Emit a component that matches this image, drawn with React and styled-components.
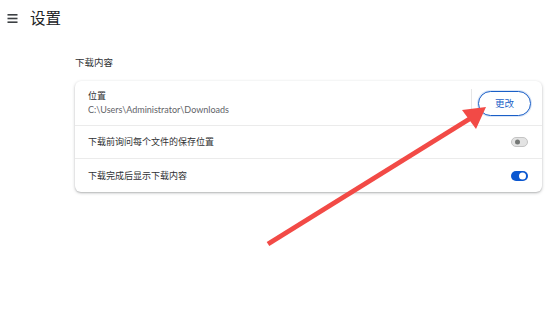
import styled, { createGlobalStyle } from "styled-components";

const GlobalStyle = createGlobalStyle`
  html, body {
    margin: 0;
    background: #fff;
  }
  body {
    font-family: "Noto Sans", "Noto Sans CJK SC", sans-serif;
    color: #202124;
  }
`;

export default function App() {
  return (
    <>
      <GlobalStyle />
      <Page>
        <Header>
          <MenuIcon viewBox="0 0 10 9">
            <rect x="0" y="0" width="10" height="1.6" />
            <rect x="0" y="3.7" width="10" height="1.6" />
            <rect x="0" y="7.4" width="10" height="1.6" />
          </MenuIcon>
          <Title>设置</Title>
        </Header>
        <Section>
          <SectionLabel>下载内容</SectionLabel>
          <Card>
            <Row $height={44}>
              <RowText>
                <RowTitle>位置</RowTitle>
                <RowSub>C:\Users\Administrator\Downloads</RowSub>
              </RowText>
              <Divider />
              <ChangeButton>更改</ChangeButton>
            </Row>
            <Row $height={33} $border>
              <RowTitle>下载前询问每个文件的保存位置</RowTitle>
              <Toggle />
            </Row>
            <Row $height={34} $border>
              <RowTitle>下载完成后显示下载内容</RowTitle>
              <Toggle $on />
            </Row>
          </Card>
        </Section>
        <Arrow viewBox="0 0 554 316">
          <line x1="268" y1="244" x2="471" y2="118" stroke="#f24a46" strokeWidth="5" />
          <polygon points="486,107 462,110 476,129" fill="#f24a46" />
        </Arrow>
      </Page>
    </>
  );
}

const Page = styled.div`
  position: relative;
  width: 554px;
  height: 316px;
  overflow: hidden;
`;

const Header = styled.div`
  display: flex;
  align-items: center;
  gap: 12px;
  height: 36px;
  padding-left: 7px;
`;

const MenuIcon = styled.svg`
  width: 11px;
  height: 9px;
  fill: #3c4043;
`;

const Title = styled.div`
  font-size: 15.5px;
  color: #202124;
  margin-top: -1px;
`;

const Section = styled.div`
  margin-left: 75px;
  width: 467px;
  padding-top: 20px;
`;

const SectionLabel = styled.div`
  font-size: 9.5px;
  line-height: 14px;
  color: #303134;
  margin-bottom: 11px;
`;

const Card = styled.div`
  background: #fff;
  border-radius: 6px;
  box-shadow: 0 1px 3px rgba(60, 64, 67, 0.35), 0 1px 1px rgba(60, 64, 67, 0.1);
`;

const Row = styled.div`
  display: flex;
  align-items: center;
  height: ${(p) => p.$height}px;
  padding: 0 13px;
  box-sizing: border-box;
  border-top: ${(p) => (p.$border ? "1px solid #ebebeb" : "none")};
`;

const RowText = styled.div`
  flex: 1;
  display: flex;
  flex-direction: column;
  gap: 2px;
`;

const RowTitle = styled.div`
  flex: 1;
  font-size: 9px;
  line-height: 12px;
  color: #303134;
`;

const RowSub = styled.div`
  font-family: Lato, "Noto Sans", sans-serif;
  font-size: 9px;
  line-height: 12px;
  color: #5f6368;
`;

const Divider = styled.div`
  width: 1px;
  height: 28px;
  background: #e6e6e6;
  margin-right: 6px;
`;

const ChangeButton = styled.button`
  width: 53px;
  height: 25px;
  border: 1.5px solid #1a5fc7;
  border-radius: 13px;
  background: #fff;
  color: #1a5fc7;
  font-family: "Noto Sans CJK SC", sans-serif;
  font-size: 9.5px;
  padding: 0;
  margin-right: -2px;
  box-shadow: 0 0 0 1px #dbe6f7;
`;

const Toggle = styled.div`
  position: relative;
  width: 17px;
  height: 10px;
  border-radius: 5px;
  margin-right: 1px;
  background: ${(p) => (p.$on ? "#0b57d0" : "#e3e3e3")};
  border: ${(p) => (p.$on ? "none" : "1px solid #c4c4c4")};
  box-sizing: border-box;

  &::after {
    content: "";
    position: absolute;
    top: 50%;
    transform: translateY(-50%);
    left: ${(p) => (p.$on ? "8px" : "3px")};
    width: ${(p) => (p.$on ? "7px" : "5px")};
    height: ${(p) => (p.$on ? "7px" : "5px")};
    border-radius: 50%;
    background: ${(p) => (p.$on ? "#fff" : "#747775")};
  }
`;

const Arrow = styled.svg`
  position: absolute;
  left: 0;
  top: 0;
  width: 554px;
  height: 316px;
  pointer-events: none;
`;
